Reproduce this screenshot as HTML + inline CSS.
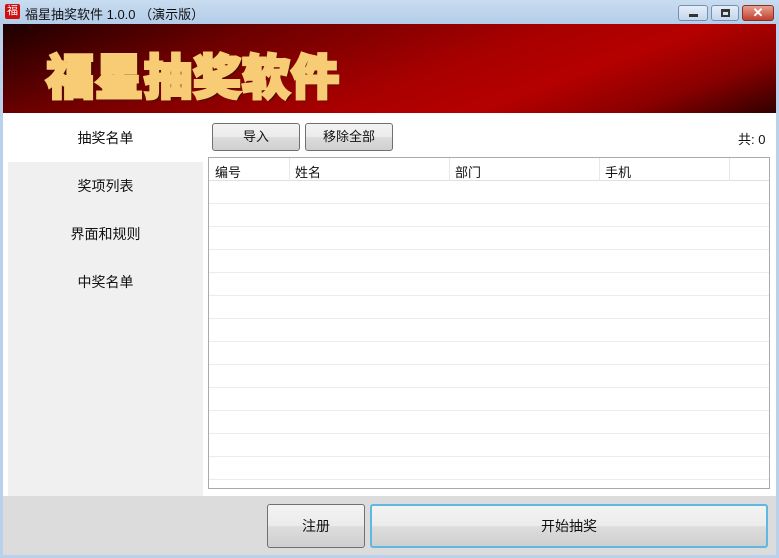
<!DOCTYPE html>
<html><head><meta charset="utf-8"><style>
*{margin:0;padding:0;box-sizing:border-box}
body{width:779px;height:558px;overflow:hidden;font-family:"Liberation Sans","Noto Sans CJK SC",sans-serif;font-size:13px;color:#111;background:#b9d1ea;position:relative}
.abs{position:absolute}
.tb{left:0;top:0;width:779px;height:24px;background:linear-gradient(#c9dcf0,#b3cde9)}
.banner{left:3px;top:24px;width:773px;height:89px;background:linear-gradient(160deg,#1c0000 0%,#6a0000 25%,#a80000 55%,#b50000 70%,#8a0000 85%,#300000 100%)}
.bt{left:46px;top:38px;font-family:"Noto Sans CJK SC",sans-serif;font-weight:900;font-size:48px;color:#f7cc74;letter-spacing:1px;-webkit-text-stroke:3px #f7cc74;line-height:70px;text-shadow:1px 1px 0 #5a2000,-1px -1px 0 #5a2000,2px 2px 1px #3a1000}
.main{left:3px;top:113px;width:773px;height:383px;background:#fff}
.nav{left:8px;top:113px;width:195px;height:383px;background:#f0f0f0}
.nav div{position:absolute;left:0;width:195px;text-align:center;font-size:14px}
.btn{border:1px solid #707070;border-radius:3px;background:linear-gradient(#f3f3f3 0%,#ebebeb 50%,#dddddd 51%,#cfcfcf 100%);text-align:center}
.grid{left:208px;top:157px;width:562px;height:332px;border:1px solid #aaa;background:#fff}
.bottom{left:3px;top:496px;width:773px;height:59px;background:#dcdcdc}
</style></head><body>
<div class="abs tb"></div>
<div class="abs" style="left:5px;top:4px;width:15px;height:15px;background:#d01010;border-radius:2px;color:#fff;font-size:11px;line-height:15px;text-align:center">福</div>
<div class="abs" style="left:25px;top:4px;font-size:13px">福星抽奖软件 1.0.0 （演示版）</div>
<div class="abs" style="left:678px;top:5px;width:30px;height:16px;border:1px solid #7890b0;border-radius:3px;background:linear-gradient(#e4eef9,#c4d6ec)"><div class="abs" style="left:10px;top:8px;width:9px;height:3px;background:#333"></div></div>
<div class="abs" style="left:711px;top:5px;width:28px;height:16px;border:1px solid #7890b0;border-radius:3px;background:linear-gradient(#e4eef9,#c4d6ec)"><div class="abs" style="left:9px;top:3px;width:9px;height:8px;border:2px solid #333;border-top-width:3px"></div></div>
<div class="abs" style="left:742px;top:5px;width:32px;height:16px;border:1px solid #8a3020;border-radius:3px;background:linear-gradient(#e8a090,#c04030);color:#fff;font-weight:bold;font-size:13px;line-height:14px;text-align:center">✕</div>
<div class="abs banner"></div>
<div class="abs bt">福星抽奖软件</div>
<div class="abs main"></div>
<div class="abs nav">
<div style="top:0;height:49px;background:#fff"></div>
<div style="top:15px">抽奖名单</div>
<div style="top:63px">奖项列表</div>
<div style="top:111px">界面和规则</div>
<div style="top:159px">中奖名单</div>
</div>
<div class="abs btn" style="left:212px;top:123px;width:88px;height:28px;line-height:26px">导入</div>
<div class="abs btn" style="left:305px;top:123px;width:88px;height:28px;line-height:26px">移除全部</div>
<div class="abs" style="left:738px;top:129px">共: 0</div>
<div class="abs grid">
<div class="abs" style="left:0;top:0;width:560px;height:23px;border-bottom:1px solid #e0e0e0"></div>
<div class="abs" style="left:6px;top:4px">编号</div>
<div class="abs" style="left:86px;top:4px">姓名</div>
<div class="abs" style="left:246px;top:4px">部门</div>
<div class="abs" style="left:396px;top:4px">手机</div>
<div class="abs" style="left:80px;top:0;width:1px;height:330px;background:#e8e8e8"></div>
<div class="abs" style="left:240px;top:0;width:1px;height:330px;background:#e8e8e8"></div>
<div class="abs" style="left:390px;top:0;width:1px;height:330px;background:#e8e8e8"></div>
<div class="abs" style="left:520px;top:0;width:1px;height:330px;background:#e8e8e8"></div>
<div class="abs" style="left:0;top:23px;width:560px;height:307px;background:repeating-linear-gradient(#fff 0,#fff 22px,#ececec 22px,#ececec 23px)"></div>
</div>
<div class="abs bottom"></div>
<div class="abs btn" style="left:267px;top:504px;width:98px;height:44px;line-height:42px;font-size:14px">注册</div>
<div class="abs btn" style="left:370px;top:504px;width:398px;height:44px;line-height:40px;font-size:14px;border:2px solid #5fb8e0">开始抽奖</div>
</body></html>
